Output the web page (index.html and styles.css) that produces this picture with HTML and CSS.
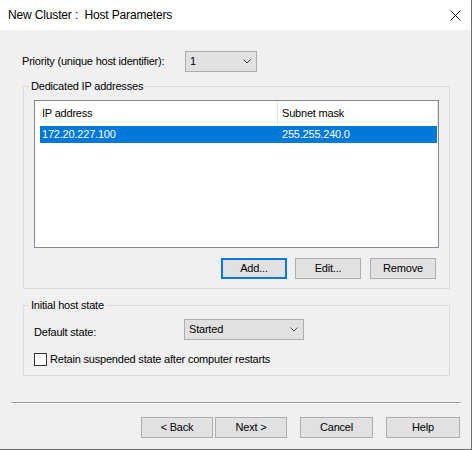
FILE: index.html
```html
<!DOCTYPE html>
<html>
<head>
<meta charset="utf-8">
<link rel="stylesheet" href="styles.css">
</head>
<body>
<div class="window">
  <div class="titlebar">
    <span class="title">New Cluster :&nbsp; Host Parameters</span>
    <svg class="close" width="11" height="11" viewBox="0 0 11 11"><path d="M0.5 0.5 L10.5 10.5 M10.5 0.5 L0.5 10.5" stroke="#111" stroke-width="1" fill="none"/></svg>
  </div>
  <div class="content">
    <div class="priority-row">
      <span class="priority-label">Priority (unique host identifier):</span>
      <div class="combo combo-small"><span>1</span><svg class="chev" width="8" height="5" viewBox="0 0 8 5"><path d="M0.5 0.5 L4 4 L7.5 0.5" stroke="#333" fill="none"/></svg></div>
    </div>

    <div class="group group-ip">
      <div class="group-title">Dedicated IP addresses</div>
      <div class="listview">
        <div class="lv-header">
          <div class="lv-h1">IP address</div>
          <div class="lv-h2">Subnet mask</div>
        </div>
        <div class="lv-row selected">
          <div class="lv-c1">172.20.227.100</div>
          <div class="lv-c2">255.255.240.0</div>
        </div>
      </div>
      <div class="group-buttons">
        <button class="btn btn-default">Add...</button>
        <button class="btn btn-edit">Edit...</button>
        <button class="btn btn-remove">Remove</button>
      </div>
    </div>

    <div class="group group-state">
      <div class="group-title">Initial host state</div>
      <div class="state-row">
        <span class="state-label">Default state:</span>
        <div class="combo combo-wide"><span>Started</span><svg class="chev" width="8" height="5" viewBox="0 0 8 5"><path d="M0.5 0.5 L4 4 L7.5 0.5" stroke="#555" fill="none"/></svg></div>
      </div>
      <div class="check-row">
        <span class="checkbox"></span>
        <span class="check-label">Retain suspended state after computer restarts</span>
      </div>
    </div>

    <div class="separator"></div>

    <div class="footer">
      <button class="btn btn-foot">&lt; Back</button>
      <button class="btn btn-foot btn-next">Next &gt;</button>
      <button class="btn btn-foot btn-cancel">Cancel</button>
      <button class="btn btn-foot btn-help">Help</button>
    </div>
  </div>
</div>
</body>
</html>
```

FILE: styles.css
```css
* { box-sizing: border-box; }
html, body { margin: 0; padding: 0; }
body {
  width: 472px;
  height: 450px;
  background: #f0f0f0;
  font-family: "Liberation Sans", Arial, sans-serif;
  font-size: 11px;
  letter-spacing: -0.2px;
  color: #000;
  overflow: hidden;
}
.window {
  width: 472px;
  height: 450px;
  border-right: 1px solid #6f6f6f;
  border-bottom: 1px solid #6f6f6f;
  background: #f0f0f0;
}
.titlebar {
  height: 30px;
  background: #fff;
  display: flex;
  align-items: center;
  justify-content: space-between;
  padding: 0 10px 0 8px;
}
.title {
  font-size: 12px;
  letter-spacing: -0.15px;
  line-height: 30px;
}
.close { display: block; }

.content { padding-top: 21px; }

.priority-row {
  display: flex;
  align-items: center;
  height: 21px;
  padding-left: 22px;
}
.priority-label { width: 163px; line-height: 13px; }

.combo {
  height: 21px;
  background: #e1e1e1;
  border: 1px solid #adadad;
  display: flex;
  align-items: center;
  justify-content: space-between;
  padding: 0 5px 0 4px;
  line-height: 19px;
}
.combo-small { width: 72px; }
.combo-wide { width: 120px; }
.chev { display: block; }

.group {
  border: 1px solid #dcdcdc;
  margin: 0 21px 0 23px;
  padding: 0 10px 9px 10px;
}
.group-ip { margin-top: 14px; }
.group-state { margin-top: 16px; }
.group-title {
  width: fit-content;
  margin: -7px 0 0 -5px;
  padding: 0 2px;
  background: #f0f0f0;
  line-height: 13px;
}

.listview {
  margin-top: 7px;
  height: 148px;
  background: #fff;
  border: 1px solid #828790;
}
.lv-header {
  display: flex;
  height: 25px;
  line-height: 25px;
}
.lv-h1 {
  width: 243px;
  padding-left: 7px;
  border-right: 1px solid #e5e5e5;
}
.lv-h2 {
  width: 160px;
  padding-left: 4px;
  border-right: 1px solid #e5e5e5;
}
.lv-row {
  display: flex;
  margin-left: 5px;
  width: 397px;
  height: 17px;
  line-height: 17px;
}
.lv-row.selected { background: #0078d7; color: #fff; }
.lv-c1 { width: 240px; padding-left: 2px; }
.lv-c2 { padding-left: 2px; }

.group-buttons {
  display: flex;
  justify-content: flex-end;
  margin-top: 10px;
  padding-right: 3px;
}
.btn {
  font-family: inherit;
  font-size: 11px;
  letter-spacing: -0.2px;
  color: #000;
  height: 21px;
  width: 66px;
  background: #e1e1e1;
  border: 1px solid #adadad;
  padding: 0;
  margin: 0;
  line-height: 19px;
}
.btn-default { border: 2px solid #0078d7; line-height: 17px; }
.btn-edit { margin-left: 8px; }
.btn-remove { margin-left: 9px; }

.state-row {
  display: flex;
  align-items: flex-start;
  margin-top: 7px;
  height: 21px;
}
.state-label { width: 150px; line-height: 13px; padding-top: 7px; }

.check-row {
  display: flex;
  align-items: center;
  margin-top: 13px;
  height: 13px;
}
.checkbox {
  width: 13px;
  height: 13px;
  background: #fff;
  border: 1px solid #333;
  margin-right: 3px;
}
.check-label { line-height: 13px; }

.separator {
  margin: 26px 10px 0 11px;
  height: 2px;
  border-top: 1px solid #a0a0a0;
  border-bottom: 1px solid #fff;
}

.footer {
  display: flex;
  justify-content: flex-end;
  margin-top: 13px;
  padding-right: 11px;
}
.btn-foot { width: 72px; }
.btn-next { margin-left: 2px; }
.btn-cancel { margin-left: 13px; width: 73px; }
.btn-help { margin-left: 13px; width: 74px; }
```
